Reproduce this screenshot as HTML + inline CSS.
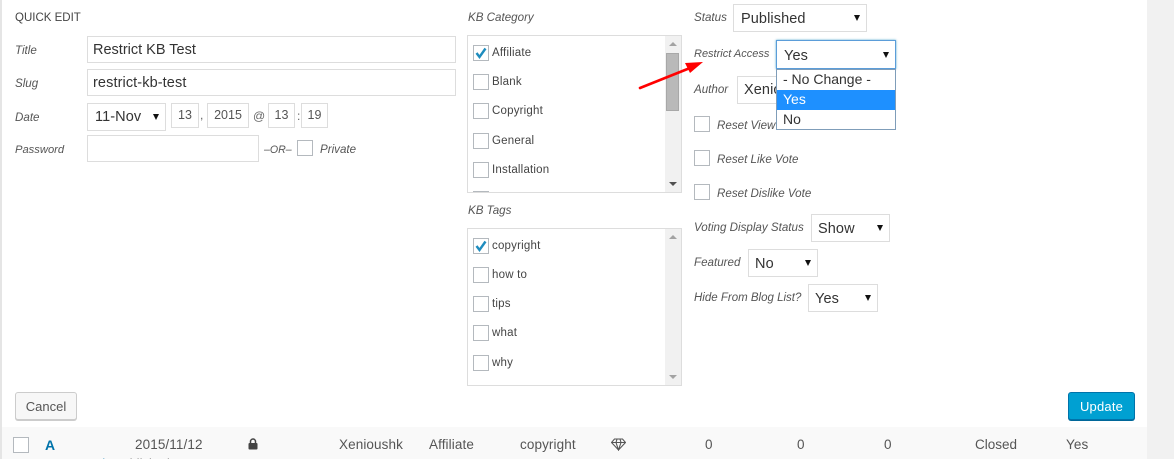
<!DOCTYPE html>
<html style="overflow:hidden;height:459px"><head><meta charset="utf-8"><style>
html,body{margin:0;padding:0}
body{width:1174px;height:459px;overflow:hidden;position:relative;background:#f1f1f1;font-family:"Liberation Sans",sans-serif;color:#444}
#w{position:absolute;left:0;top:0;width:1174px;height:459px;overflow:hidden}
#m{position:absolute;left:2px;top:0;width:1145px;height:427px;background:#fff}
#l{position:absolute;left:0;top:0;width:2px;height:459px;background:#e5e5e5}
#r{position:absolute;left:2px;top:427px;width:1145px;height:32px;background:#f9f9f9}
.a{position:absolute;white-space:nowrap}
.lb{position:absolute;white-space:nowrap;font-style:italic;font-size:11.6px;line-height:16px;color:#555;margin-top:1px}
.in{position:absolute;box-sizing:border-box;border:1px solid #ddd;background:#fff;font-size:14.5px;color:#333;padding-left:5px;white-space:nowrap;letter-spacing:.1px}
.sm{font-size:12.5px;color:#555;text-align:center;padding:0;letter-spacing:0}
.sel::after{content:"";position:absolute;right:6px;top:50%;margin-top:-3px;border-left:3.5px solid transparent;border-right:3.5px solid transparent;border-top:6px solid #111}
.cb{position:absolute;box-sizing:border-box;width:16px;height:16px;border:1px solid #b4b9be;background:#fff}
.li{position:absolute;left:492px;font-size:11.5px;line-height:14px;color:#444;white-space:nowrap;letter-spacing:.2px}
.box{position:absolute;box-sizing:border-box;left:467px;width:215px;border:1px solid #ddd;background:#fff}
.sb{position:absolute;left:665px;width:16px;background:#f1f1f1}
.t{position:absolute;top:437px;font-size:13.5px;line-height:16px;color:#555;white-space:nowrap;letter-spacing:.1px}
.o{padding-left:6px;height:20px;line-height:18px}
</style></head><body><div id="w">
<div id="m"></div><div id="l"></div><div id="r"></div>

<div class="a" style="left:15px;top:10px;font-size:11.5px;line-height:16px;color:#444">QUICK EDIT</div>
<div class="lb" style="left:15px;top:42px">Title</div>
<div class="lb" style="left:15px;top:75px">Slug</div>
<div class="lb" style="left:15px;top:109px">Date</div>
<div class="lb" style="left:15px;top:141px;font-size:11.2px">Password</div>
<div class="in" style="left:87px;top:36px;width:369px;height:27px;line-height:27px;letter-spacing:0">Restrict KB Test</div>
<div class="in" style="left:87px;top:69px;width:369px;height:27px;line-height:27px">restrict-kb-test</div>
<div class="in sel" style="left:87px;top:103px;width:79px;height:28px;line-height:27px;padding-left:7px">11-Nov</div>
<div class="in sm" style="left:171px;top:103px;width:28px;height:25px;line-height:23px">13</div>
<div class="a" style="left:200px;top:108px;font-size:12px;color:#666">,</div>
<div class="in sm" style="left:207px;top:103px;width:42px;height:25px;line-height:23px">2015</div>
<div class="a" style="left:253px;top:108px;font-size:12px;line-height:16px;color:#666">@</div>
<div class="in sm" style="left:268px;top:103px;width:27px;height:25px;line-height:23px">13</div>
<div class="a" style="left:297px;top:108px;font-size:12px;line-height:16px;color:#666">:</div>
<div class="in sm" style="left:301px;top:103px;width:27px;height:25px;line-height:23px">19</div>
<div class="in" style="left:87px;top:135px;width:172px;height:27px"></div>
<div class="lb" style="left:264px;top:141px;font-size:10.6px">–OR–</div>
<div class="cb" style="left:297px;top:140px"></div>
<div class="lb" style="left:320px;top:141px">Private</div>

<div class="lb" style="left:468px;top:9px">KB Category</div>
<div class="box" style="top:35px;height:158px"></div>
<div class="sb" style="top:36px;height:156px"></div>
<div class="a" style="left:666px;top:36px;width:14px;height:156px">
<svg width="14" height="156" style="display:block"><path d="M3 10L7 6L11 10Z" fill="#a3a3a3"/><rect x="0.500" y="17.500" width="12" height="57" fill="#b9b9b9" stroke="#a8a8a8"/><path d="M3 146L7 150L11 146Z" fill="#505050"/></svg></div>
<div class="cb" style="left:473px;top:45px"></div>
<svg class="a" style="left:473px;top:45px" width="16" height="16"><path d="M3.500 8L6.500 12L12.500 3.500" fill="none" stroke="#1e8cbe" stroke-width="2.400"/></svg>
<div class="li" style="top:46px">Affiliate</div>
<div class="cb" style="left:473px;top:74px"></div><div class="li" style="top:75px">Blank</div>
<div class="cb" style="left:473px;top:103px"></div><div class="li" style="top:104px">Copyright</div>
<div class="cb" style="left:473px;top:133px"></div><div class="li" style="top:134px">General</div>
<div class="cb" style="left:473px;top:162px"></div><div class="li" style="top:163px">Installation</div>
<div class="cb" style="left:473px;top:191px;height:1px;border-bottom:0"></div>

<div class="lb" style="left:468px;top:202px">KB Tags</div>
<div class="box" style="top:228px;height:158px"></div>
<div class="sb" style="top:229px;height:156px"></div>
<svg class="a" style="left:666px;top:229px" width="14" height="156"><path d="M3 10L7 6L11 10Z" fill="#a3a3a3"/><path d="M3 146L7 150L11 146Z" fill="#a3a3a3"/></svg>
<div class="cb" style="left:473px;top:238px"></div>
<svg class="a" style="left:473px;top:238px" width="16" height="16"><path d="M3.500 8L6.500 12L12.500 3.500" fill="none" stroke="#1e8cbe" stroke-width="2.400"/></svg>
<div class="li" style="top:239px">copyright</div>
<div class="cb" style="left:473px;top:267px"></div><div class="li" style="top:268px">how to</div>
<div class="cb" style="left:473px;top:296px"></div><div class="li" style="top:297px">tips</div>
<div class="cb" style="left:473px;top:325px"></div><div class="li" style="top:326px">what</div>
<div class="cb" style="left:473px;top:355px"></div><div class="li" style="top:356px">why</div>

<div class="lb" style="left:694px;top:9px">Status</div>
<div class="in sel" style="left:733px;top:4px;width:134px;height:28px;line-height:29px;padding-left:7px">Published</div>
<div class="lb" style="left:694px;top:45px;font-size:11px">Restrict Access</div>
<div class="lb" style="left:694px;top:81px">Author</div>
<div class="in" style="left:737px;top:76px;width:60px;height:28px;line-height:27px;padding-left:6px">Xenioushk</div>
<div class="cb" style="left:694px;top:116px"></div><div class="lb" style="left:717px;top:117px">Reset View Count</div>
<div class="cb" style="left:694px;top:150px"></div><div class="lb" style="left:717px;top:151px">Reset Like Vote</div>
<div class="cb" style="left:694px;top:184px"></div><div class="lb" style="left:717px;top:185px">Reset Dislike Vote</div>
<div class="lb" style="left:694px;top:219px">Voting Display Status</div>
<div class="in sel" style="left:811px;top:214px;width:79px;height:28px;line-height:28px;padding-left:6px">Show</div>
<div class="lb" style="left:694px;top:254px">Featured</div>
<div class="in sel" style="left:748px;top:249px;width:70px;height:28px;line-height:28px;padding-left:6px">No</div>
<div class="lb" style="left:694px;top:289px;font-size:11.500px">Hide From Blog List?</div>
<div class="in sel" style="left:808px;top:284px;width:70px;height:28px;line-height:28px;padding-left:6px">Yes</div>

<div class="in sel" style="left:776px;top:40px;width:120px;height:29px;line-height:30px;padding-left:7px;border-color:#5b9dd9;box-shadow:0 0 2px rgba(30,140,190,.8);z-index:2">Yes</div>
<div class="a" style="left:776px;top:69px;width:120px;height:61px;box-sizing:border-box;border:1px solid #7f9db9;background:#fff;font-size:14px;color:#333;z-index:2">
<div class="o">- No Change -</div>
<div class="o" style="background:#1e90ff;color:#fff">Yes</div>
<div class="o" style="height:19px">No</div>
</div>

<svg class="a" style="left:636px;top:58px;z-index:3" width="70" height="34"><path d="M4 30L54 10" stroke="#f00" stroke-width="2.600" stroke-linecap="round"/><path d="M67 4L49 5L54 15Z" fill="#f00"/></svg>

<div class="a" style="left:15px;top:392px;width:62px;height:28px;box-sizing:border-box;border:1px solid #ccc;border-radius:3px;background:#f7f7f7;box-shadow:0 1px 0 #ccc;font-size:13px;line-height:27px;text-align:center;color:#555">Cancel</div>
<div class="a" style="left:1068px;top:392px;width:67px;height:28px;box-sizing:border-box;border:1px solid #0073aa;border-radius:3px;background:#00a0d2;box-shadow:0 1px 0 #006799;font-size:13px;line-height:27px;text-align:center;color:#fff;letter-spacing:.2px">Update</div>

<div class="cb" style="left:13px;top:437px"></div>
<div class="t" style="left:45px;font-weight:bold;color:#0073aa;font-size:14px">A</div>
<div class="t" style="left:135px">2015/11/12</div>
<svg class="a" style="left:248px;top:438px" width="10" height="12"><path d="M2.500 5V3.500a2.500 2.500 0 0 1 5 0V5" fill="none" stroke="#444" stroke-width="1.500"/><rect x="0.500" y="5" width="9" height="6.500" rx="1" fill="#444"/></svg>
<div class="t" style="left:339px">Xenioushk</div>
<div class="t" style="left:429px">Affiliate</div>
<div class="t" style="left:520px">copyright</div>
<svg class="a" style="left:611px;top:438px" width="15" height="13"><path d="M3.500 1H11.500L14.500 4.500L7.500 12L0.500 4.500ZM0.500 4.500H14.500M5 4.500L7.500 12L10 4.500M5 4.500L6 1M10 4.500L9 1" fill="none" stroke="#555" stroke-width="1.100"/></svg>
<div class="t" style="left:705px">0</div>
<div class="t" style="left:797px">0</div>
<div class="t" style="left:884px">0</div>
<div class="t" style="left:975px;letter-spacing:0">Closed</div>
<div class="t" style="left:1066px">Yes</div>
<div class="a" style="left:101px;top:456px;font-size:12px;line-height:14px;color:#0073aa;letter-spacing:.3px">/ &nbsp;&nbsp;&nbsp;&nbsp;<span style="color:#555">ublished</span></div>
</div></body></html>
